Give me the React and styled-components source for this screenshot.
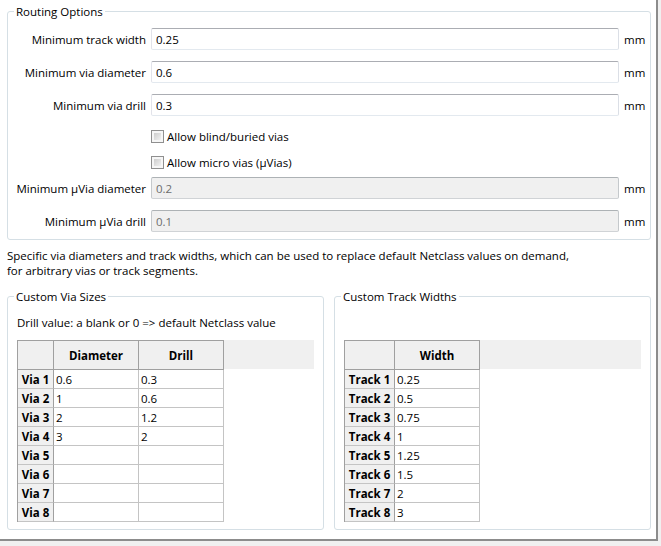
import React from 'react';
import styled, { createGlobalStyle } from 'styled-components';

const Global = createGlobalStyle`
  html, body { margin: 0; padding: 0; background: #f0f0f0; }
  body {
    font-family: "Open Sans", "Noto Sans", sans-serif;
    font-size: 11.5px;
    color: #000;
  }
  *, *::before, *::after { box-sizing: border-box; }
`;

const Panel = styled.div`
  width: 658px;
  height: 541px;
  background: #fff;
  border-right: 2px solid #8c8c8c;
  border-bottom: 2px solid #8c8c8c;
  padding: 3px 5px 0 7px;
  display: flex;
  flex-direction: column;
`;

const Group = styled.fieldset`
  margin: 0;
  padding: 0;
  min-width: 0;
  width: ${p => p.$w || 644}px;
  border: 1px solid #d5dfe5;
  border-radius: 3px;
`;

const Legend = styled.legend`
  margin-left: 6px;
  padding: 0 2px;
  height: 17px;
  line-height: 17px;
  font-size: 11.5px;
`;

const RoutingBody = styled.div`
  display: flex;
  flex-direction: column;
  padding: 0 0 7px 0;
`;

const Row = styled.div`
  display: grid;
  grid-template-columns: 138px 1fr 26px;
  column-gap: 5px;
  align-items: center;
  margin-top: ${p => p.$gap}px;
  height: ${p => p.$h || 22}px;
`;

const FieldLabel = styled.label`
  text-align: right;
  white-space: nowrap;
  line-height: 15px;
`;

const TextInput = styled.input`
  height: 22px;
  width: 100%;
  border: 1px solid;
  border-color: #abadb3 #dbdfe6 #e3e9ef #e2e3ea;
  border-radius: 2px;
  padding: 0 4px;
  font: inherit;
  color: #000;
  background: #fff;
  outline: none;
  &:disabled {
    background: #f0f0f0;
    color: #6d6d6d;
    border-color: #adb2b5 #c5c9cc #d0d3d6 #c5c9cc;
  }
`;

const Unit = styled.span`
  white-space: nowrap;
  line-height: 15px;
`;

const CheckLabel = styled.label`
  grid-column: 2;
  display: flex;
  align-items: center;
  gap: 3px;
  line-height: 15px;
  white-space: nowrap;
`;

const Checkbox = styled.input`
  appearance: none;
  margin: 0;
  width: 13px;
  height: 13px;
  border: 1px solid #8f8f8f;
  padding: 2px;
  background:
    linear-gradient(135deg, #cdcdcd, #f1f1f1) content-box,
    linear-gradient(#f6f6f6, #f6f6f6) padding-box;
`;

const Description = styled.p`
  margin: 8px 0 0 0;
  line-height: 15px;
`;

const BottomRow = styled.div`
  display: flex;
  gap: 10px;
  margin-top: 10px;
`;

const CustomBody = styled.div`
  padding: 0 9px 7px 9px;
`;

const Note = styled.div`
  margin-top: 10px;
  height: 15px;
  line-height: 15px;
  white-space: nowrap;
`;

const GridWrap = styled.div`
  margin-top: 10px;
  background: linear-gradient(#f0f0f0, #f0f0f0) no-repeat 0 0 / 100% 29px;
`;

const Grid = styled.div`
  display: grid;
  width: max-content;
  grid-template-columns: ${p => p.$cols};
  border-left: 1px solid #a0a0a0;
  border-top: 1px solid #a0a0a0;
`;

const Corner = styled.div`
  height: 29px;
  background: #f0f0f0;
  border-right: 1px solid #a0a0a0;
  border-bottom: 1px solid #a0a0a0;
`;

const HeadCell = styled.div`
  height: 29px;
  background: #f0f0f0;
  border-right: 1px solid #a0a0a0;
  border-bottom: 1px solid #a0a0a0;
  display: flex;
  align-items: center;
  justify-content: center;
  font-weight: 700;
`;

const RowHead = styled.div`
  height: 19px;
  background: #f0f0f0;
  border-right: 1px solid #a0a0a0;
  border-bottom: 1px solid #c4c4c4;
  display: flex;
  align-items: center;
  justify-content: center;
  font-weight: 700;
  white-space: nowrap;
`;

const Cell = styled.div`
  height: 19px;
  background: #fff;
  border-right: 1px solid #c4c4c4;
  border-bottom: 1px solid #c4c4c4;
  padding-left: 2px;
  display: flex;
  align-items: center;
`;

const routing = [
  { label: 'Minimum track width', value: '0.25', gap: 8 },
  { label: 'Minimum via diameter', value: '0.6', gap: 11 },
  { label: 'Minimum via drill', value: '0.3', gap: 11 },
];

const micro = [
  { label: 'Minimum \u00b5Via diameter', value: '0.2', gap: 9 },
  { label: 'Minimum \u00b5Via drill', value: '0.1', gap: 11 },
];

const vias = [
  ['0.6', '0.3'], ['1', '0.6'], ['2', '1.2'], ['3', '2'],
  ['', ''], ['', ''], ['', ''], ['', ''],
];

const tracks = ['0.25', '0.5', '0.75', '1', '1.25', '1.5', '2', '3'];

function FieldRow({ label, value, gap, disabled }) {
  return (
    <Row $gap={gap}>
      <FieldLabel>{label}</FieldLabel>
      <TextInput defaultValue={value} disabled={disabled} />
      <Unit>mm</Unit>
    </Row>
  );
}

export default function App() {
  return (
    <>
      <Global />
      <Panel>
        <Group>
          <Legend>Routing Options</Legend>
          <RoutingBody>
            {routing.map(r => <FieldRow key={r.label} {...r} />)}
            <Row $gap={13} $h={13}>
              <CheckLabel><Checkbox type="checkbox" />Allow blind/buried vias</CheckLabel>
            </Row>
            <Row $gap={13} $h={13}>
              <CheckLabel><Checkbox type="checkbox" />Allow micro vias (µVias)</CheckLabel>
            </Row>
            {micro.map(r => <FieldRow key={r.label} {...r} disabled />)}
          </RoutingBody>
        </Group>

        <Description>
          Specific via diameters and track widths, which can be used to replace default Netclass values on demand,
          <br />
          for arbitrary vias or track segments.
        </Description>

        <BottomRow>
          <Group $w={317}>
            <Legend>Custom Via Sizes</Legend>
            <CustomBody>
              <Note>Drill value: a blank or 0 =&gt; default Netclass value</Note>
              <GridWrap>
                <Grid $cols="36px 85px 85px">
                  <Corner />
                  <HeadCell>Diameter</HeadCell>
                  <HeadCell>Drill</HeadCell>
                  {vias.map((v, i) => (
                    <React.Fragment key={i}>
                      <RowHead>Via {i + 1}</RowHead>
                      <Cell>{v[0]}</Cell>
                      <Cell>{v[1]}</Cell>
                    </React.Fragment>
                  ))}
                </Grid>
              </GridWrap>
            </CustomBody>
          </Group>

          <Group $w={317}>
            <Legend>Custom Track Widths</Legend>
            <CustomBody>
              <Note />
              <GridWrap>
                <Grid $cols="50px 85px">
                  <Corner />
                  <HeadCell>Width</HeadCell>
                  {tracks.map((t, i) => (
                    <React.Fragment key={i}>
                      <RowHead>Track {i + 1}</RowHead>
                      <Cell>{t}</Cell>
                    </React.Fragment>
                  ))}
                </Grid>
              </GridWrap>
            </CustomBody>
          </Group>
        </BottomRow>
      </Panel>
    </>
  );
}
